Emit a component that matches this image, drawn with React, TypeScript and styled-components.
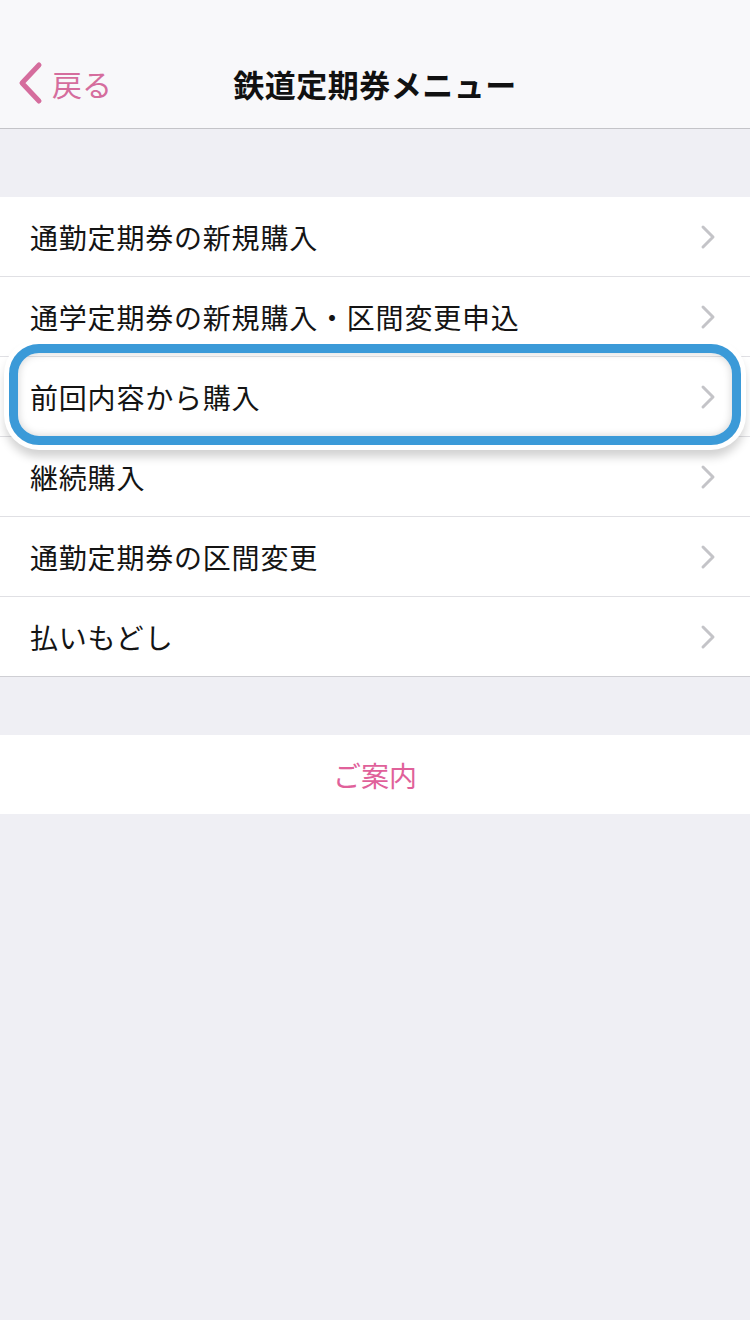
import React from 'react'
import styled, { createGlobalStyle } from 'styled-components'

const GlobalStyle = createGlobalStyle`
  html, body {
    margin: 0;
    padding: 0;
    background: #efeff4;
    font-family: "Noto Sans CJK JP", "Noto Sans", sans-serif;
  }
`

const Page = styled.div`
  width: 750px;
  min-height: 1320px;
  background: #efeff4;
`

const Header = styled.header`
  height: 129px;
  background: #f8f8fa;
  border-bottom: 1px solid #c4c4c8;
  display: grid;
  grid-template-columns: 160px 1fr 160px;
  align-items: center;
  padding-top: 38px;
  box-sizing: border-box;
`

const BackLink = styled.div`
  display: flex;
  align-items: center;
  gap: 8px;
  padding-left: 16px;
  color: #d56d9d;
  font-size: 30px;
`

const Title = styled.h1`
  margin: 0;
  text-align: center;
  font-size: 31px;
  font-weight: 700;
  color: #111;
  letter-spacing: 0.5px;
`

const Group = styled.div<{ $gap: number }>`
  margin-top: ${(p) => p.$gap}px;
  background: #fff;
`

const Row = styled.div<{ $last?: boolean }>`
  position: relative;
  height: 79px;
  display: flex;
  align-items: center;
  justify-content: space-between;
  padding: 0 34px 0 30px;
  border-bottom: 1px solid ${(p) => (p.$last ? '#cfcfd4' : '#e0e0e4')};
  font-size: 28px;
  color: #141414;
  letter-spacing: 0.8px;
`

const CenterRow = styled.div`
  height: 79px;
  display: flex;
  align-items: center;
  justify-content: center;
  font-size: 28px;
  color: #e0619a;
`

const Highlight = styled.div`
  position: absolute;
  top: -13px;
  bottom: -9px;
  left: 9px;
  right: 9px;
  border: 9px solid #3b9ad8;
  border-radius: 30px;
  box-shadow: 0 0 0 5px #fff, 0 8px 10px 4px rgba(0, 0, 0, 0.18),
    inset 0 0 8px rgba(0, 0, 0, 0.18);
  pointer-events: none;
`

const Chevron = () => (
  <svg width="16" height="26" viewBox="0 0 16 26">
    <path d="M3 3 L13 13 L3 23" fill="none" stroke="#c4c4c8" strokeWidth="3" strokeLinecap="round" strokeLinejoin="round" />
  </svg>
)

const BackChevron = () => (
  <svg width="28" height="44" viewBox="0 0 28 44">
    <path d="M23 4 L6 22 L23 40" fill="none" stroke="#d56d9d" strokeWidth="5" strokeLinecap="round" strokeLinejoin="round" />
  </svg>
)

const items = [
  '通勤定期券の新規購入',
  '通学定期券の新規購入・区間変更申込',
  '前回内容から購入',
  '継続購入',
  '通勤定期券の区間変更',
  '払いもどし',
]

const App: React.FC = () => {
  return (
    <Page>
      <GlobalStyle />
      <Header>
        <BackLink>
          <BackChevron />
          <span>戻る</span>
        </BackLink>
        <Title>鉄道定期券メニュー</Title>
        <div />
      </Header>
      <Group $gap={68}>
        {items.map((label, i) => (
          <Row key={label} $last={i === items.length - 1}>
            <span>{label}</span>
            <Chevron />
            {i === 2 && <Highlight />}
          </Row>
        ))}
      </Group>
      <Group $gap={58}>
        <CenterRow>ご案内</CenterRow>
      </Group>
    </Page>
  )
}

export default App
